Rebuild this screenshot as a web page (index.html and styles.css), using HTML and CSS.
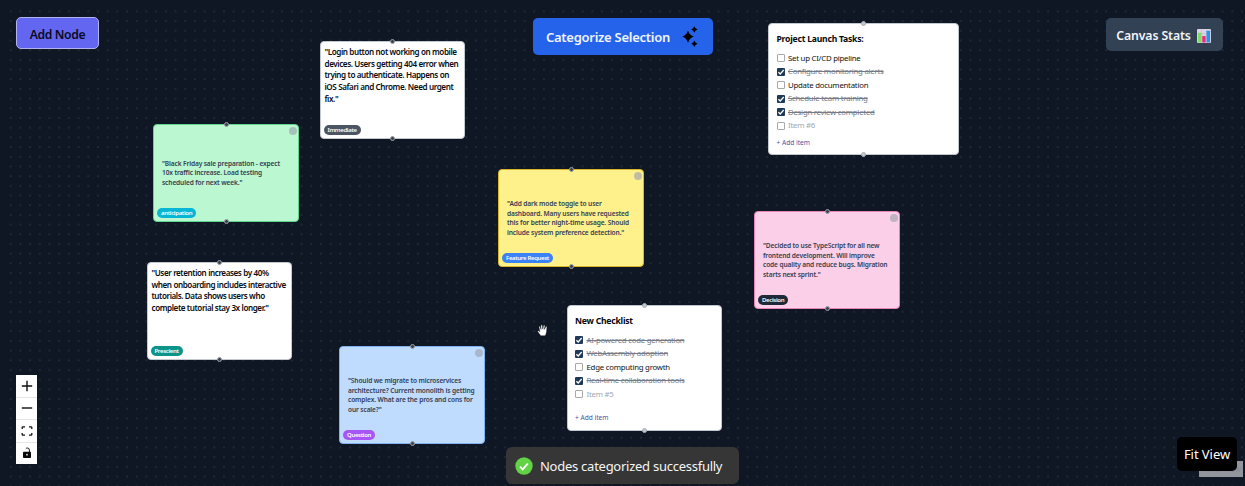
FILE: index.html
```
<!DOCTYPE html>
<html lang="en">
<head>
<meta charset="utf-8">
<title>Canvas</title>
<link rel="stylesheet" href="styles.css">
</head>
<body>
<main class="canvas">
  <svg class="grid" width="1245" height="486" aria-hidden="true">
    <defs><pattern id="dots" x="5.85" y="6.5" width="9.695" height="9.69" patternUnits="userSpaceOnUse"><circle cx="4.85" cy="4.85" r=".55" fill="#566070"/></pattern></defs>
    <rect x="8" y="8" width="1237" height="478" fill="url(#dots)"/>
  </svg>

  <article class="node text-node n-login"><p>"Login button not working on mobile<br>devices. Users getting 404 error when<br>trying to authenticate. Happens on<br>iOS Safari and Chrome. Need urgent<br>fix."</p><span class="tag slate">Immediate</span></article>
  <article class="node sticky green n-friday"><i class="dot"></i><p>"Black Friday sale preparation - expect<br>10x traffic increase. Load testing<br>scheduled for next week."</p><span class="tag cyan">anticipation</span></article>
  <article class="node text-node n-retention"><p>"User retention increases by 40%<br>when onboarding includes interactive<br>tutorials. Data shows users who<br>complete tutorial stay 3x longer."</p><span class="tag teal">Prescient</span></article>
  <article class="node sticky blue n-micro"><i class="dot"></i><p>"Should we migrate to microservices<br>architecture? Current monolith is getting<br>complex. What are the pros and cons for<br>our scale?"</p><span class="tag purple">Question</span></article>
  <article class="node sticky yellow n-dark"><i class="dot"></i><p>"Add dark mode toggle to user<br>dashboard. Many users have requested<br>this for better night-time usage. Should<br>include system preference detection."</p><span class="tag azure">Feature Request</span></article>
  <article class="node sticky pink n-typescript"><i class="dot"></i><p>"Decided to use TypeScript for all new<br>frontend development. Will improve<br>code quality and reduce bugs. Migration<br>starts next sprint."</p><span class="tag navy">Decision</span></article>

  <article class="node checklist n-launch">
    <h2>Project Launch Tasks:</h2>
    <ul>
      <li><i class="box"></i><span>Set up CI/CD pipeline</span></li>
      <li class="done"><i class="box"><svg viewBox="0 0 8 8"><path d="M1.4 4.2 3.2 6 6.7 2"/></svg></i><span>Configure monitoring alerts</span></li>
      <li><i class="box"></i><span>Update documentation</span></li>
      <li class="done"><i class="box"><svg viewBox="0 0 8 8"><path d="M1.4 4.2 3.2 6 6.7 2"/></svg></i><span>Schedule team training</span></li>
      <li class="done"><i class="box"><svg viewBox="0 0 8 8"><path d="M1.4 4.2 3.2 6 6.7 2"/></svg></i><span>Design review completed</span></li>
      <li class="empty"><i class="box"></i><span>Item #6</span></li>
    </ul>
    <div class="add">+ Add item</div>
  </article>
  <article class="node checklist n-new">
    <h2>New Checklist</h2>
    <ul>
      <li class="done"><i class="box"><svg viewBox="0 0 8 8"><path d="M1.4 4.2 3.2 6 6.7 2"/></svg></i><span>AI-powered code generation</span></li>
      <li class="done"><i class="box"><svg viewBox="0 0 8 8"><path d="M1.4 4.2 3.2 6 6.7 2"/></svg></i><span>WebAssembly adoption</span></li>
      <li><i class="box"></i><span>Edge computing growth</span></li>
      <li class="done"><i class="box"><svg viewBox="0 0 8 8"><path d="M1.4 4.2 3.2 6 6.7 2"/></svg></i><span>Real-time collaboration tools</span></li>
      <li class="empty"><i class="box"></i><span>Item #5</span></li>
    </ul>
    <div class="add">+ Add item</div>
  </article>

  <svg class="cursor" width="12" height="13" viewBox="0 0 12 13"><path d="M3.8 11.8 1 8.1C.1 7 1 6.2 2 7l.9.7L2 3.2c-.2-1.2 1-1.4 1.3-.3L4 5.2 3.9 1.7c0-1.2 1.4-1.2 1.5 0l.4 3.2.7-3.3c.3-1.1 1.5-.8 1.4.3l-.4 3.3 1.1-2.3c.5-1 1.6-.5 1.3.5L9.6 7.3c-.2 1.5-.5 3-1.4 4.5z" fill="#fff" stroke="#070a10" stroke-width=".4"/><path d="M4.1 4.8v1M5.8 4.6v1M7.4 4.8 7.2 5.8" stroke="#555" stroke-width=".4"/></svg>

  <button class="btn add-node">Add Node</button>
  <button class="btn categorize"><span>Categorize Selection</span><svg width="16" height="22" viewBox="0 0 16 22"><path d="M6 4.5Q7.3 9.2 11.9 10.6 7.3 12 6 17 4.7 12 .2 10.6 4.7 9.2 6 4.5ZM12.3.3Q13 2.7 15.5 3.5 13 4.3 12.3 6.7 11.6 4.3 9.2 3.5 11.6 2.7 12.3.3ZM12.3 14.5Q13 16.9 15.5 17.7 13 18.5 12.3 20.9 11.6 18.5 9.2 17.7 11.6 16.9 12.3 14.5Z"/></svg></button>
  <button class="btn stats"><span>Canvas Stats</span><svg width="14" height="14" viewBox="0 0 15 15"><rect width="15" height="15" rx="1.2" fill="#ddd3e4"/><path d="M5 0v15M10 0v15M0 5h15" stroke="#bdb3c8" stroke-width=".5"/><rect x="1" y="4" width="3.7" height="10.5" rx=".5" fill="#7edb6c"/><rect x="5.6" y="7.5" width="3.7" height="7" rx=".5" fill="#ee2b7b"/><rect x="10.2" y="2" width="3.8" height="12.5" rx=".5" fill="#2495e8"/></svg></button>

  <nav class="controls">
    <button><svg width="12" height="12" viewBox="0 0 12 12"><path d="M6 .8v10.4M.8 6h10.4" stroke="#111" stroke-width="1.4"/></svg></button>
    <button><svg width="12" height="12" viewBox="0 0 12 12"><path d="M.8 6h10.4" stroke="#111" stroke-width="1.4"/></svg></button>
    <button><svg width="12" height="12" viewBox="0 0 12 12"><path d="M1.2 4V2.5Q1.2 1.8 2 1.8h2M8 1.8h2q.8 0 .8.7V4M10.8 8v1.5q0 .7-.8.7H8M4 10.2H2q-.8 0-.8-.7V8" fill="none" stroke="#111" stroke-width="1.3"/></svg></button>
    <button><svg width="10" height="12" viewBox="0 0 10 12"><path d="M7.4 5V3Q7.3 1 5.4 1 4.3 1 3.8 1.7" fill="none" stroke="#111" stroke-width="1"/><rect x="1" y="4.8" width="8" height="6.2" rx=".8" fill="#080808"/><circle cx="5" cy="7.7" r=".9" fill="#ddd"/></svg></button>
  </nav>
  <div class="attribution">React Flow</div>
  <div class="fit">Fit View</div>
  <div class="toast"><svg width="18" height="18" viewBox="0 0 18 18"><circle cx="9" cy="9" r="8.7" fill="#61d345"/><path d="m5 9.7 2.7 2.7 5.2-6" fill="none" stroke="#fff" stroke-width="1.7"/></svg><span>Nodes categorized successfully</span></div>
</main>
</body>
</html>
```
FILE: styles.css
```
* { box-sizing: border-box; }
body { margin: 0; background: #101724; font-family: "Noto Sans", "Open Sans", sans-serif; }
p, h2, ul { margin: 0; padding: 0; }
button { font: inherit; border: 0; padding: 0; }
.canvas { position: relative; width: 1245px; height: 486px; overflow: hidden; background: #101724; }
.grid { display: block; }

.node { position: absolute; width: 145.5px; height: 97.5px; border: 1px solid #c3c7ce; border-radius: 4px; background: #fff; display: flex; flex-direction: column; white-space: nowrap; }
.node::before, .node::after { content: ""; position: absolute; left: 50%; width: 3px; height: 3px; margin-left: -2px; border: 1px solid #9a9fa8; border-radius: 50%; background: #3c424d; }
.node::before { top: -3px; }
.node::after { bottom: -3px; }
.checklist.node::before, .checklist.node::after { background: #c3c7ce; border-color: #a9adb5; }
.text-node { padding: 4px; }
.text-node p { font-size: 8.1px; line-height: 11.7px; font-weight: 600; letter-spacing: -.42px; word-spacing: .1px; color: #080b12; }
.sticky { justify-content: center; padding: 1px 8px 0; }
.sticky p { font-size: 6.6px; line-height: 9.75px; font-weight: 600; letter-spacing: -.13px; color: #354052; }
.dot { position: absolute; top: 2px; right: 1px; width: 8px; height: 8px; border-radius: 50%; background: #9ca3af; opacity: .65; }
.tag { position: absolute; left: 3px; bottom: 3px; height: 10px; padding: 0 4px; border-radius: 5px; color: #fff; font-size: 6px; line-height: 10px; font-weight: 600; letter-spacing: -.33px; }
.slate { background: #4b5563; }
.cyan { background: #06b6d4; }
.teal { background: #0d9488; }
.purple { background: #a855f7; }
.azure { background: #3b82f6; }
.navy { background: #1f2937; }
.green { background: #bbf7d0; border-color: #5fd68b; }
.blue { background: #bfdbfe; border-color: #7fb2f0; }
.yellow { background: #fef08a; border-color: #d9b52c; }
.pink { background: #fbcfe8; border-color: #e584b8; }
.n-login { left: 319.5px; top: 41px; }
.n-friday { left: 153px; top: 124px; }
.n-retention { left: 146.5px; top: 262px; }
.n-micro { left: 339px; top: 346px; }
.n-dark { left: 498px; top: 169px; }
.n-typescript { left: 754px; top: 211px; }

.checklist { padding: 9px 7.5px; }
.checklist h2 { font-size: 8.6px; line-height: 12px; font-weight: 700; letter-spacing: -.22px; color: #05070b; }
.checklist ul { list-style: none; margin-top: 6.5px; }
.checklist li { display: flex; align-items: center; gap: 3.5px; height: 13.55px; font-size: 7.8px; line-height: 13.55px; letter-spacing: -.24px; color: #111; }
.box { width: 8px; height: 8px; border: 1px solid #a8a8a8; border-radius: 1px; background: #fff; display: flex; flex: none; }
.done .box { border: 0; background: #1e3a56; }
.box svg { width: 8px; height: 8px; fill: none; stroke: #fff; stroke-width: 1.3; }
.checklist .done { color: #747b87; }
.done span { text-decoration: line-through; }
.checklist .empty { color: #a0a7b2; }
.add { font-size: 6.6px; line-height: 9px; color: #4356a6; margin-top: 5.5px; }
.n-launch { left: 768px; top: 23px; width: 190.5px; height: 132px; }
.n-new { left: 566.5px; top: 305px; width: 155.5px; height: 126px; }
.n-new .add { margin-top: 12px; }
.cursor { position: absolute; left: 537px; top: 324px; }

.btn { position: absolute; display: flex; align-items: center; justify-content: center; white-space: nowrap; font-weight: 600; border-radius: 5px; }
.add-node { left: 16px; top: 17px; width: 83px; height: 32px; padding-top: 2px; background: #6366f1; border: 1px solid #b0b3ed; color: #0a0b20; font-size: 12.2px; letter-spacing: -.4px; }
.categorize { left: 533px; top: 18px; width: 180px; height: 37px; padding-right: 2px; gap: 12px; background: #2563eb; color: #f1f5ff; font-size: 13px; letter-spacing: -.27px; }
.stats { left: 1106px; top: 18px; width: 117px; height: 33px; padding: 2px 2px 0 0; gap: 6px; background: #334155; color: #f1f5f9; font-size: 12.3px; letter-spacing: -.12px; }

.controls { position: absolute; left: 16px; top: 375px; width: 21px; height: 89px; background: #fff; display: flex; flex-direction: column; }
.controls button { flex: 1; display: flex; align-items: center; justify-content: center; background: none; border-bottom: 1px solid #e5e5e5; }
.controls button:last-child { border-bottom: 0; }
.attribution { position: absolute; left: 1199px; top: 461px; width: 44px; height: 16px; background: #92959b; color: #858890; font-size: 8px; line-height: 16px; text-align: center; white-space: nowrap; }
.fit { position: absolute; left: 1177px; top: 437px; width: 60px; height: 34px; border-radius: 5px; background: #000; color: #fff; font-size: 13px; line-height: 35px; text-align: center; letter-spacing: -.05px; white-space: nowrap; }
.toast { position: absolute; left: 506px; top: 447px; width: 233px; height: 37px; border-radius: 6px; background: #363636; color: #f5f5f5; display: flex; align-items: center; padding-left: 9px; gap: 7px; font-size: 13px; letter-spacing: -.26px; white-space: nowrap; }
```
